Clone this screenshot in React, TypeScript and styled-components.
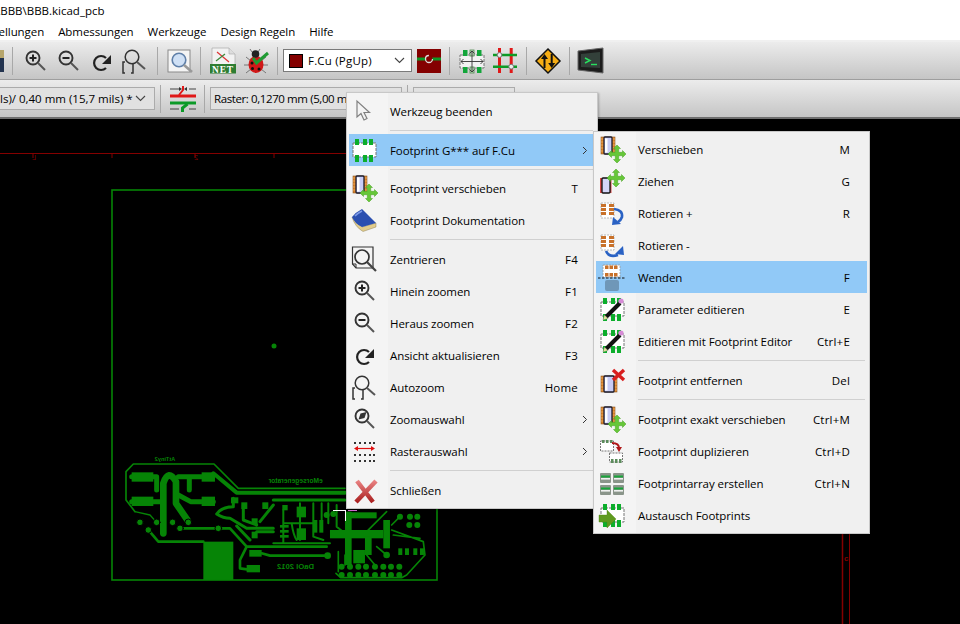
import React from "react";
import styled, { createGlobalStyle } from "styled-components";

const GlobalStyle = createGlobalStyle`
  html, body {
    margin: 0;
    padding: 0;
    background: #000;
  }
  body {
    font-family: "Open Sans", "Noto Sans", sans-serif;
    font-size: 11.5px;
    color: #000;
  }
`;

const Page = styled.div`
  position: relative;
  width: 960px;
  height: 624px;
  display: flex;
  flex-direction: column;
  overflow: hidden;
`;

const TitleBar = styled.div`
  height: 21px;
  background: #fff;
  display: flex;
  align-items: center;
`;

const TitleText = styled.span`
  margin-left: -4px;
`;

const MenuBar = styled.div`
  height: 19px;
  background: #fff;
  display: flex;
  align-items: center;
  gap: 14px;
  padding-top: 2px;
  box-sizing: border-box;
  letter-spacing: -0.07px;
`;

const FirstMenu = styled.span`
  margin-left: -27px;
`;

const Toolbar = styled.div<{ $h: number }>`
  height: ${(p) => p.$h}px;
  flex: none;
  display: flex;
  align-items: center;
  box-sizing: border-box;
  background: linear-gradient(#ececec, #c5c5c5);
  border-bottom: 1px solid #9e9e9e;
`;

const TopBar = styled(Toolbar)`
  border-top: 2px solid #f0f0f0;
`;

const SecondBar = styled(Toolbar)`
  border-bottom: 2px solid #6e6e6e;
`;

const ToolGroup = styled.div`
  display: flex;
  padding: 0 1px;
`;

const ToolBtn = styled.div<{ $w?: number }>`
  width: ${(p) => p.$w ?? 33}px;
  height: 33px;
  flex: none;
  display: flex;
  align-items: center;
  justify-content: center;
`;

const Sep = styled.div`
  width: 1px;
  height: 28px;
  flex: none;
  margin: 0 5px;
  background: #a8a8a8;
`;

const LeadIcon = styled.div`
  width: 4px;
  height: 22px;
  flex: none;
  margin-right: 3px;
  background: linear-gradient(#b7a66c 0 8px, #23344f 8px);
`;

const LayerSelect = styled.div`
  width: 129px;
  height: 23px;
  box-sizing: border-box;
  flex: none;
  display: flex;
  align-items: center;
  background: #fff;
  border: 1px solid #7a7a7a;
  padding: 0 6px 0 5px;
  gap: 5px;
  letter-spacing: 0.2px;
`;

const Swatch = styled.div`
  width: 14px;
  height: 14px;
  background: #840000;
  border: 1px solid #000;
  flex: none;
  box-sizing: border-box;
`;

const Grow = styled.span`
  flex: 1;
  white-space: nowrap;
`;

const LayerButton = styled.div`
  width: 24px;
  height: 24px;
  margin-left: 5px;
  margin-right: 3px;
  flex: none;
  background: #840000;
`;

const Combo = styled.div<{ $w: number }>`
  width: ${(p) => p.$w}px;
  height: 23px;
  flex: none;
  box-sizing: border-box;
  display: flex;
  align-items: center;
  padding: 0 8px 0 3px;
  background: #e1e1e1;
  border: 1px solid #ababab;
  overflow: hidden;
  white-space: nowrap;
`;

const CutCombo = styled(Combo)`
  padding-left: 0;
  border-left: 0;
`;

const GridCombo = styled(Combo)`
  letter-spacing: -0.4px;
`;

const Canvas = styled.div`
  flex: 1;
  background: #000;
  min-height: 0;
`;

const Popup = styled.div<{ $x: number; $y: number; $w: number; $gutter: number; $top: number }>`
  position: absolute;
  left: ${(p) => p.$x}px;
  top: ${(p) => p.$y}px;
  width: ${(p) => p.$w}px;
  box-sizing: border-box;
  padding: ${(p) => p.$top}px 2px 2px;
  background: linear-gradient(90deg, #f4f4f4 ${(p) => p.$gutter}px, #f0f0f0 0);
  border: 1px solid #c8c8c8;
  box-shadow: 1px 1px 2px rgba(0, 0, 0, 0.25);
`;

const Row = styled.div<{ $active?: boolean }>`
  height: 32px;
  display: flex;
  align-items: center;
  background: ${(p) => (p.$active ? "#91c9f7" : "transparent")};
  white-space: nowrap;
`;

const Gutter = styled.div<{ $w: number; $pad: number }>`
  width: ${(p) => p.$w}px;
  padding-left: ${(p) => p.$pad}px;
  box-sizing: border-box;
  height: 100%;
  flex: none;
  display: flex;
  align-items: center;
`;

const Label = styled.span`
  flex: 1;
  letter-spacing: -0.07px;
`;

const Shortcut = styled.span`
  margin-right: 17px;
  flex: none;
  letter-spacing: 0.2px;
`;

const Arrow = styled.span`
  width: 13px;
  flex: none;
  display: flex;
  align-items: center;
`;

const Divider = styled.div<{ $h: number; $gutter: number }>`
  height: ${(p) => p.$h}px;
  display: flex;
  align-items: center;
  padding-left: ${(p) => p.$gutter}px;
  &::after {
    content: "";
    flex: 1;
    height: 1px;
    background: #d0d0d0;
    margin-right: 2px;
  }
`;

const IconSvg = styled.svg`
  display: block;
  overflow: visible;
  flex: none;
`;

const S = ({ children }: { children: React.ReactNode }) => (
  <IconSvg width="26" height="26" viewBox="0 0 26 26">
    {children}
  </IconSvg>
);

const Chip = ({ x = 1, y = 1, w = 14, h = 17 }) => (
  <g>
    <rect x={x} y={y} width={w} height={h} fill="#d9822b" stroke="#8c5a28" strokeWidth=".6" />
    {[2, 5, 8, 11, 14].map((d) => (
      <path key={d} d={`M${x} ${y + d}h${w}`} stroke="#f0b060" strokeWidth=".8" />
    ))}
    <rect x={x + 3} y={y} width={w - 6} height={h} rx="1" fill="#c9cdf6" stroke="#1a1a2a" strokeWidth="1.3" />
    <rect x={x + 4} y={y + 1.5} width={2.5} height={h - 3} fill="#fff" />
  </g>
);

const MoveCross = ({ cx = 17, cy = 18 }) => (
  <path
    transform={`translate(${cx} ${cy})`}
    d="M0-9l3.5 3.5H1.7V-1.7H5.5V-3.5L9 0 5.5 3.5V1.7H1.7V5.5H3.5L0 9-3.5 5.5H-1.7V1.7H-5.5V3.5L-9 0-5.5-3.5V-1.7H-1.7V-5.5H-3.5z"
    fill="#66c738"
    stroke="#46a020"
    strokeWidth=".5"
  />
);

const FootprintBody = () => (
  <g>
    <rect x="1" y="6" width="23" height="14" fill="#fff" stroke="#777" strokeDasharray="3 1" />
    {[3, 11, 17].map((x) => (
      <React.Fragment key={x}>
        <rect x={x} y="2" width="4" height="6" fill="#0cae2c" />
        <rect x={x} y="18" width="4" height="7" fill="#0cae2c" />
      </React.Fragment>
    ))}
  </g>
);

const Pencil = () => (
  <g>
    <path d="M6 21L20 7" stroke="#111" strokeWidth="4" />
    <path d="M3 24l1.5-5 3.5 3.5z" fill="#e6e89a" stroke="#777" strokeWidth=".4" />
    <circle cx="21" cy="5" r="2.6" fill="#d68ad6" />
  </g>
);

const ZoomGlass = ({ mark }: { mark?: "plus" | "minus" | "dot" }) => (
  <g fill="none" stroke="#333" strokeWidth="1.9">
    <circle cx="10" cy="10" r="6.5" />
    <path d="M15 15l7 7" strokeWidth="2" stroke="#555" />
    {mark === "plus" && <path d="M6.5 10h7M10 6.5v7" stroke="#222" strokeWidth="2" />}
    {mark === "minus" && <path d="M6.5 10h7" stroke="#222" strokeWidth="2" />}
    {mark === "dot" && <path d="M6.5 13.5l2-6 6-1.5-2 6z" fill="#333" stroke="none" />}
  </g>
);

const RedrawIcon = () => (
  <g>
    <path d="M17 20A7 7 0 1 1 17 10" fill="none" stroke="#222" strokeWidth="2.2" />
    <path d="M22 7v9h-9z" fill="#222" />
  </g>
);

const AutoZoomIcon = () => (
  <g fill="none" stroke="#333" strokeWidth="1.5">
    <circle cx="10" cy="9" r="6.8" />
    <path d="M15 14l8 7" strokeWidth="2" stroke="#555" />
    <path d="M3 14H1v11h2M9 25h2V15" />
  </g>
);

const CenterIcon = () => (
  <g>
    <path d="M.5 1H21V22H4L.5 18z" fill="#f4f4f4" stroke="#333" strokeWidth="1.2" />
    <path d="M.5 18H4V22" fill="none" stroke="#333" strokeWidth="1" />
    <circle cx="10" cy="11" r="7" fill="#f4f4f4" stroke="#333" strokeWidth="1.7" />
    <path d="M15 16l9 9" stroke="#444" strokeWidth="2.2" />
  </g>
);

const GridIcon = () => (
  <g>
    {[2, 7, 12, 17, 21].flatMap((x) =>
      [4, 16, 22].map((y) => <rect key={`${x}-${y}`} x={x} y={y} width="2" height="2" fill="#333" />),
    )}
    <path d="M5 10.5h15" stroke="#e01010" strokeWidth="1.2" />
    <path d="M2 10.5l4-2.5v5zM23 10.5l-4-2.5v5z" fill="#e01010" />
  </g>
);

const RedX = ({ w = 4.5, d = "M5 4L21 25M24 4L4 25" }) => (
  <>
    <defs>
      <linearGradient id="xFade" gradientUnits="userSpaceOnUse" x1="0" y1="2" x2="0" y2="26">
        <stop offset="0" stopColor="#ee8a8a" />
        <stop offset="1" stopColor="#a81c1c" />
      </linearGradient>
    </defs>
    <path d={d} fill="none" stroke="url(#xFade)" strokeWidth={w} />
  </>
);

const BookIcon = () => (
  <g>
    <path d="M0 10L10 20 24 16 24 20 11 24.5Q3 20 0 10z" fill="#e2cc8c" stroke="#7a6a3a" strokeWidth=".4" />
    <path d="M0 10Q4 5 10 2L24 16 10 20Q3 17 0 10z" fill="#2b4fb0" />
    <path d="M3 9Q6 6 10 4" fill="none" stroke="#7d9ae6" strokeWidth="1.6" />
  </g>
);

const CursorIcon = () => (
  <path d="M5 3V19L9 15.5 12 22 15 20.5 12 14.5H17.5z" fill="#f4f4f4" stroke="#808080" strokeWidth="1.2" />
);

const SmallChip = () => (
  <g>
    <rect x="1" y="3" width="13" height="15" fill="#fff" stroke="#aaa" strokeWidth=".8" strokeDasharray="2 1" />
    {[4, 8, 12].map((y) => (
      <React.Fragment key={y}>
        <rect x="1" y={y} width="5" height="3" fill="#c8712a" />
        <rect x="9" y={y} width="5" height="3" fill="#c8712a" />
      </React.Fragment>
    ))}
  </g>
);

const RotatePlus = () => (
  <g>
    <SmallChip />
    <path d="M14 9Q23 10 22 17Q21 20 18 22" fill="none" stroke="#2a62c4" strokeWidth="2.6" />
    <path d="M12 25L13 17 21 24z" fill="#2a62c4" />
  </g>
);

const RotateMinus = () => (
  <g>
    <SmallChip />
    <path d="M6 19Q9 26 18 23" fill="none" stroke="#2a62c4" strokeWidth="2.6" />
    <path d="M23 14L24 23 15 22z" fill="#2a62c4" />
  </g>
);

const FlipIcon = () => (
  <g>
    <rect x="3" y="1" width="17" height="12" fill="#fff" stroke="#999" strokeWidth=".8" strokeDasharray="2 1" />
    {[5, 9.5, 14].map((x) => (
      <React.Fragment key={x}>
        <rect x={x} y="1.5" width="3.5" height="3.5" fill="#c8712a" />
        <rect x={x} y="9" width="3.5" height="3.5" fill="#c8712a" />
      </React.Fragment>
    ))}
    <path d="M-2 14H25" stroke="#111" strokeWidth="1" strokeDasharray="2.5 1.5" />
    <rect x="5" y="16" width="14" height="11" rx="2" fill="#6f97b8" />
  </g>
);

const DeleteIcon = () => (
  <g>
    <Chip x={1} y={9} w={16} h={16} />
    <path d="M13 3L24 13M24 3L13 13" stroke="#d81e1e" strokeWidth="3.4" />
  </g>
);

const DragIcon = () => (
  <g>
    <rect x="0" y="10" width="11.5" height="15" fill="#d84a4a" />
    <rect x="2" y="10" width="8" height="15" rx="1" fill="#d4d6f8" stroke="#111" strokeWidth="1.3" />
    <MoveCross cx={16} cy={10} />
  </g>
);

const DuplicateIcon = () => (
  <g>
    <rect x="0.5" y="3" width="13" height="10" fill="#fff" stroke="#777" strokeDasharray="2 1" />
    <rect x="9.5" y="15" width="13" height="9" fill="#fff" stroke="#777" strokeDasharray="2 1" />
    {[2, 6, 10].map((x) => (
      <rect key={x} x={x} y="2" width="2.5" height="3" fill="#5c8c5c" />
    ))}
    {[11, 15, 19].map((x) => (
      <rect key={x} x={x} y="21" width="2.5" height="4" fill="#5c8c5c" />
    ))}
    <path d="M12 5c5 0 7 2 7 5" fill="none" stroke="#b01818" strokeWidth="2" />
    <path d="M16 9h6l-3 5z" fill="#b01818" />
  </g>
);

const ArrayIcon = () => (
  <g>
    {[0, 13].flatMap((x) =>
      [3, 15].map((y) => (
        <g key={`${x}-${y}`}>
          <rect x={x} y={y} width="11" height="10" rx="1" fill="#8a958a" />
          <rect x={x + 1} y={y + 2.5} width="9" height="2" fill="#19a53a" />
          <rect x={x + 1} y={y + 5} width="9" height="1.6" fill="#f0f0f0" />
        </g>
      )),
    )}
  </g>
);

const ExchangeIcon = () => (
  <g>
    <FootprintBody />
    <path d="M-1 13H7V8L16 17 7 26V20H-1z" fill="#5f9a1f" stroke="#4b8410" strokeWidth=".4" />
  </g>
);

const NetIcon = () => (
  <g>
    <path d="M2 0H19L25 6V17H2z" fill="#f2f2f2" stroke="#aaa" strokeWidth=".7" />
    <path d="M19 0V6H25" fill="#ddd" stroke="#aaa" strokeWidth=".6" />
    <path d="M7 4L19 14" stroke="#d33" strokeWidth="1.2" />
    <path d="M6 13L15 6" stroke="#3a8a3a" strokeWidth="1.2" />
    <rect x="0" y="16" width="26" height="9.5" fill="#2e7d32" />
    <text x="13" y="24.5" textAnchor="middle" fontFamily="Liberation Serif, serif" fontWeight="bold" fontSize="9.5" letterSpacing=".8" fill="#fff">
      NET
    </text>
  </g>
);

const BugIcon = () => (
  <g>
    <path d="M3 9l5 4M1 17h5M3 25l5-4M23 9l-5 4M25 17h-5M23 25l-5-4M7 1l2 3M17 1l-2 3" stroke="#777" strokeWidth="1" />
    <ellipse cx="13" cy="16.5" rx="7.5" ry="8.5" fill="#d01818" />
    <circle cx="12.5" cy="6" r="3.8" fill="#222" />
    <circle cx="9" cy="15" r="1.5" fill="#111" />
    <circle cx="9.5" cy="20.5" r="1.5" fill="#111" />
    <circle cx="16" cy="21" r="1.5" fill="#111" />
    <path d="M10 10L13.5 15 25 5" fill="none" stroke="#1f9b33" strokeWidth="3" />
  </g>
);

const FitIcon = () => (
  <g>
    <rect x="2" y="2" width="22" height="22" fill="#f4f4f4" stroke="#8a8a8a" />
    <circle cx="13" cy="12" r="6.8" fill="#cfe0f5" stroke="#5f7fa8" strokeWidth="1.6" />
    <path d="M18 17l8 7" stroke="#999" strokeWidth="2.6" />
  </g>
);

const RouteIcon = () => (
  <g>
    <rect x="1" y="7" width="24" height="13" fill="#f2f2f2" stroke="#777" strokeDasharray="3 1" />
    {[4, 18].map((x) => (
      <React.Fragment key={x}>
        <rect x={x} y="2" width="4.5" height="6" fill="#12a53a" />
        <rect x={x} y="19" width="4.5" height="6" fill="#12a53a" />
      </React.Fragment>
    ))}
    <rect x="11" y="2" width="4" height="6" fill="#bfd8bf" stroke="#4f8a4f" strokeWidth=".8" />
    <rect x="11" y="19" width="4" height="6" fill="#bfd8bf" stroke="#4f8a4f" strokeWidth=".8" />
    <path d="M2 13.5H24M4.5 11L2 13.5 4.5 16M21.5 11L24 13.5 21.5 16M13 3V24M10.5 5.5L13 3 15.5 5.5M10.5 21.5L13 24 15.5 21.5" fill="none" stroke="#333" strokeWidth=".9" />
  </g>
);

const DrcGridIcon = () => (
  <g>
    <path d="M7.5 0V25M19.2 0V25" stroke="#e01818" strokeWidth="3" />
    <path d="M1 7H25M1 18.7H25" stroke="#0d9b26" strokeWidth="2.6" />
    <circle cx="7.5" cy="7" r="2.4" fill="#eee" stroke="#777" />
    <circle cx="19.2" cy="18.7" r="2.4" fill="#eee" stroke="#777" />
  </g>
);

const SignIcon = () => (
  <g>
    <path d="M13 1L25 13 13 25 1 13z" fill="#f6ad14" stroke="#111" strokeWidth="1.5" />
    <path d="M9.5 20V10M16.7 6V16" stroke="#111" strokeWidth="2" />
    <path d="M6 11L9.5 6 13 11zM13.2 15L16.7 20 20.2 15z" fill="#111" />
  </g>
);

const TerminalIcon = () => (
  <g>
    <path d="M1 3L26 0V25L1 22z" fill="#1c1c1c" stroke="#666" />
    <path d="M4 6L23 4V20L4 19z" fill="#33403a" />
    <path d="M8 10L13 12.5 8 15" fill="none" stroke="#28e05f" strokeWidth="1.4" />
    <path d="M14 16.5H20" stroke="#28e05f" strokeWidth="1.4" />
  </g>
);

const ViasIcon = () => (
  <g>
    <path d="M1 4h9M20 4h7" stroke="#333" strokeWidth=".9" />
    <path d="M13 4l-3-2v4zM15 4l3-2v4z" fill="#333" />
    <path d="M1 11h26" stroke="#e01818" strokeWidth="3" />
    <path d="M1 18h26" stroke="#0c9a28" strokeWidth="3" />
    <path d="M14 1v4l-4 5" fill="none" stroke="#e01818" strokeWidth="2" />
    <path d="M13.5 27v-4l5-4" fill="none" stroke="#0c9a28" strokeWidth="3" />
    <path d="M1 24h9M20 24h7" stroke="#333" strokeWidth=".9" />
  </g>
);

type Item =
  | "sep"
  | number
  | {
      label: string;
      key?: string;
      icon: React.ReactNode;
      active?: boolean;
      more?: boolean;
    };

const chipMove = (
  <>
    <Chip />
    <MoveCross />
  </>
);

const mainItems: Item[] = [
  { label: "Werkzeug beenden", icon: <CursorIcon /> },
  "sep",
  { label: "Footprint G*** auf F.Cu", icon: <FootprintBody />, active: true, more: true },
  6,
  { label: "Footprint verschieben", key: "T", icon: chipMove },
  { label: "Footprint Dokumentation", icon: <BookIcon /> },
  "sep",
  { label: "Zentrieren", key: "F4", icon: <CenterIcon /> },
  { label: "Hinein zoomen", key: "F1", icon: <ZoomGlass mark="plus" /> },
  { label: "Heraus zoomen", key: "F2", icon: <ZoomGlass mark="minus" /> },
  { label: "Ansicht aktualisieren", key: "F3", icon: <RedrawIcon /> },
  { label: "Autozoom", key: "Home", icon: <AutoZoomIcon /> },
  { label: "Zoomauswahl", icon: <ZoomGlass mark="dot" />, more: true },
  { label: "Rasterauswahl", icon: <GridIcon />, more: true },
  "sep",
  { label: "Schließen", icon: <RedX /> },
];

const pencilFootprint = (
  <>
    <FootprintBody />
    <Pencil />
  </>
);

const subItems: Item[] = [
  { label: "Verschieben", key: "M", icon: chipMove },
  { label: "Ziehen", key: "G", icon: <DragIcon /> },
  { label: "Rotieren +", key: "R", icon: <RotatePlus /> },
  { label: "Rotieren -", icon: <RotateMinus /> },
  { label: "Wenden", key: "F", icon: <FlipIcon />, active: true },
  { label: "Parameter editieren", key: "E", icon: pencilFootprint },
  { label: "Editieren mit Footprint Editor", key: "Ctrl+E", icon: pencilFootprint },
  "sep",
  { label: "Footprint entfernen", key: "Del", icon: <DeleteIcon /> },
  "sep",
  { label: "Footprint exakt verschieben", key: "Ctrl+M", icon: chipMove },
  { label: "Footprint duplizieren", key: "Ctrl+D", icon: <DuplicateIcon /> },
  { label: "Footprintarray erstellen", key: "Ctrl+N", icon: <ArrayIcon /> },
  { label: "Austausch Footprints", icon: <ExchangeIcon /> },
];

type MenuProps = { items: Item[]; x: number; y: number; w: number; gutter: number; pad: number; top: number };

function Menu({ items, x, y, w, gutter, pad, top }: MenuProps) {
  return (
    <Popup $x={x} $y={y} $w={w} $gutter={gutter} $top={top}>
      {items.map((item, i) =>
        item === "sep" || typeof item === "number" ? (
          <Divider key={i} $h={item === "sep" ? 7 : item} $gutter={gutter} />
        ) : (
          <Row key={item.label} $active={item.active}>
            <Gutter $w={gutter} $pad={pad}>
              <S>{item.icon}</S>
            </Gutter>
            <Label>{item.label}</Label>
            {item.more ? (
              <Arrow>
                <svg width="6" height="9" viewBox="0 0 6 9">
                  <path d="M1 1l3.5 3.5L1 8" fill="none" stroke="#333" strokeWidth="1" />
                </svg>
              </Arrow>
            ) : (
              item.key && <Shortcut>{item.key}</Shortcut>
            )}
          </Row>
        ),
      )}
    </Popup>
  );
}

const Chevron = () => (
  <svg width="11" height="7" viewBox="0 0 11 7">
    <path d="M1 1l4.5 4.5L10 1" fill="none" stroke="#444" strokeWidth="1.1" />
  </svg>
);

// drawn in 3x coords: page = 100 + x / 3, 440 + y / 3
const padsBottom = [725, 750, 775, 798, 825, 850, 873, 898];

function Board() {
  return (
    <svg width="960" height="505" viewBox="0 119 960 505" style={{ display: "block" }}>
      <path d="M0 153.5H346M33 153v5M112 153v5M195 153v5M274 153v5" stroke="#840000" strokeWidth="1" fill="none" />
      <path d="M842.5 534V624" stroke="#840000" strokeWidth="1.5" />
      <path d="M849.5 534V624" stroke="#840000" strokeWidth="1" />
      <text x="-36" y="160" transform="scale(-1 1)" fontSize="7" fill="#840000" fontFamily="Liberation Sans, sans-serif">L</text>
      <text x="-198" y="160" transform="scale(-1 1)" fontSize="7" fill="#840000" fontFamily="Liberation Sans, sans-serif">2</text>
      <text x="844" y="561" fontSize="8" fontWeight="bold" fill="#840000" fontFamily="Liberation Sans, sans-serif">c</text>
      <rect x="112" y="190" width="325" height="390" fill="none" stroke="#068406" strokeWidth="1.6" />
      <circle cx="274" cy="346" r="2.5" fill="#068406" />
      <g transform="translate(100 440) scale(.3333)" fill="none" stroke="#068406" strokeLinejoin="round" strokeLinecap="round">
        <path d="M105 215L78 180V95L100 72H342L415 145H735" strokeWidth="5" />
        <path d="M105 215L150 225L170 247" strokeWidth="4" />
        <path d="M340 100L410 158H735" strokeWidth="12" />
        <path d="M95 110H170V150M95 185H185M235 110H335M268 150V115M235 165L272 185H340" strokeWidth="15" />
        <path d="M190 280V130Q205 85 228 125V190L262 240" strokeWidth="20" />
        <path d="M145 270L175 305H310M240 265H390L440 320H680M440 320L420 360V385L470 392M485 340L510 347H680" strokeWidth="8" />
        <path d="M350 222Q365 200 400 200V175M350 222Q370 235 390 235L440 265H520M430 195V240L470 255M520 195L480 245M410 258L450 300M520 275H470M520 180H735" strokeWidth="9" />
        <path d="M550 210V310M600 190V300M640 190V290L670 300M665 190V270M685 190V250M710 195V260L735 280M550 250H640M520 310H690M575 250Q580 285 590 300" strokeWidth="6" />
        <path d="M800 275L860 215M875 255L900 230M875 270L970 305M880 285L960 295M970 305L975 345L920 405L905 413H722L708 400M715 335V395M735 345V375M800 345L825 375M830 320L860 345" strokeWidth="5" />
        <g fill="#068406" stroke="none">
          <rect x="95" y="97" width="65" height="28" />
          <rect x="95" y="170" width="65" height="28" />
          <rect x="305" y="97" width="40" height="28" />
          <rect x="305" y="170" width="40" height="28" />
          <rect x="310" y="305" width="90" height="115" />
          <rect x="448" y="330" width="37" height="20" />
          <rect x="440" y="375" width="40" height="22" />
          <rect x="393" y="172" width="22" height="18" />
          <rect x="424" y="187" width="18" height="20" />
          <rect x="487" y="187" width="18" height="20" />
          <rect x="547" y="195" width="16" height="16" />
          <rect x="590" y="200" width="28" height="32" />
          <rect x="590" y="265" width="28" height="35" />
          <rect x="540" y="255" width="26" height="8" />
          <rect x="540" y="270" width="26" height="8" />
          <rect x="540" y="285" width="26" height="8" />
          <rect x="455" y="235" width="18" height="18" />
          <rect x="455" y="275" width="18" height="20" />
          <rect x="640" y="240" width="12" height="38" />
          <rect x="658" y="240" width="12" height="38" />
          <rect x="735" y="215" width="20" height="160" />
          <rect x="690" y="270" width="160" height="25" />
          <rect x="850" y="240" width="20" height="85" />
          <rect x="740" y="217" width="90" height="18" />
          <rect x="795" y="290" width="20" height="55" />
          <rect x="760" y="330" width="35" height="40" />
          {[895, 915, 940, 960].map((x) => (
            <rect key={x} x={x} y="325" width="12" height="20" />
          ))}
          <circle cx="683" cy="347" r="10" />
          <circle cx="860" cy="345" r="10" />
          {padsBottom.map((x) => (
            <React.Fragment key={x}>
              <circle cx={x} cy="405" r="9" />
              <circle cx={x} cy="380" r="9" />
            </React.Fragment>
          ))}
          {[[900, 230], [930, 230], [952, 230], [928, 255], [952, 255], [700, 222], [680, 225]].map(([x, y]) => (
            <circle key={`${x}-${y}`} cx={x} cy={y} r="9" />
          ))}
        </g>
        <g fill="#068406" stroke="#000" strokeWidth="3">
          {[[120, 247], [170, 247], [218, 247], [265, 247], [145, 270], [240, 265], [355, 265]].map(([x, y]) => (
            <circle key={`${x}-${y}`} cx={x} cy={y} r="10" />
          ))}
        </g>
        <g fill="#068406" stroke="none" fontFamily="Liberation Sans, sans-serif" fontWeight="bold">
          <text x="-226" y="62" transform="scale(-1 1)" fontSize="17">AtTiny2</text>
          <text x="-668" y="130" transform="scale(-1 1)" fontSize="20">eMorsegenerator</text>
          <text x="-642" y="386" transform="scale(-1 1)" fontSize="23">DaOl 2012</text>
        </g>
      </g>
      <path d="M333 510.5H346M345.5 510V521" stroke="#fff" strokeWidth="1" />
      <path d="M348 510.5H357" stroke="#e070e0" strokeWidth="1" />
    </svg>
  );
}

export default function App() {
  return (
    <Page>
      <GlobalStyle />
      <TitleBar>
        <TitleText>\BBB\BBB.kicad_pcb</TitleText>
      </TitleBar>
      <MenuBar>
        <FirstMenu>Einstellungen</FirstMenu>
        <span>Abmessungen</span>
        <span>Werkzeuge</span>
        <span>Design Regeln</span>
        <span>Hilfe</span>
      </MenuBar>
      <TopBar $h={40}>
        <LeadIcon />
        <Sep />
        <ToolGroup>
          <ToolBtn><S><ZoomGlass mark="plus" /></S></ToolBtn>
          <ToolBtn><S><ZoomGlass mark="minus" /></S></ToolBtn>
          <ToolBtn><S><RedrawIcon /></S></ToolBtn>
          <ToolBtn><S><AutoZoomIcon /></S></ToolBtn>
        </ToolGroup>
        <Sep />
        <ToolBtn $w={32}><S><FitIcon /></S></ToolBtn>
        <Sep />
        <ToolBtn><S><NetIcon /></S></ToolBtn>
        <ToolBtn><S><BugIcon /></S></ToolBtn>
        <Sep />
        <LayerSelect>
          <Swatch />
          <Grow>F.Cu (PgUp)</Grow>
          <Chevron />
        </LayerSelect>
        <LayerButton>
          <svg width="24" height="24" viewBox="0 0 24 24">
            <path d="M0 10h24" stroke="#0c9a28" strokeWidth="3" />
            <circle cx="12" cy="10" r="3.5" fill="#840000" stroke="#ddd" strokeWidth="1.3" strokeDasharray="16 6" />
          </svg>
        </LayerButton>
        <Sep />
        <ToolBtn><S><RouteIcon /></S></ToolBtn>
        <ToolBtn><S><DrcGridIcon /></S></ToolBtn>
        <Sep />
        <ToolBtn $w={32}><S><SignIcon /></S></ToolBtn>
        <Sep />
        <ToolBtn $w={30}><S><TerminalIcon /></S></ToolBtn>
      </TopBar>
      <SecondBar $h={39}>
        <CutCombo $w={155}>
          <Grow>ls)/ 0,40 mm (15,7 mils) *</Grow>
          <Chevron />
        </CutCombo>
        <Sep />
        <ToolBtn>
          <svg width="28" height="28" viewBox="0 0 28 28">
            <ViasIcon />
          </svg>
        </ToolBtn>
        <Sep />
        <GridCombo $w={192}>
          <Grow>Raster: 0,1270 mm (5,00 mils)</Grow>
        </GridCombo>
        <Sep />
        <Combo $w={102} />
      </SecondBar>
      <Canvas>
        <Board />
      </Canvas>
      <Menu items={mainItems} x={346} y={92} w={252} gutter={41} pad={3} top={2} />
      <Menu items={subItems} x={593} y={131} w={277} gutter={42} pad={4} top={1} />
    </Page>
  );
}
